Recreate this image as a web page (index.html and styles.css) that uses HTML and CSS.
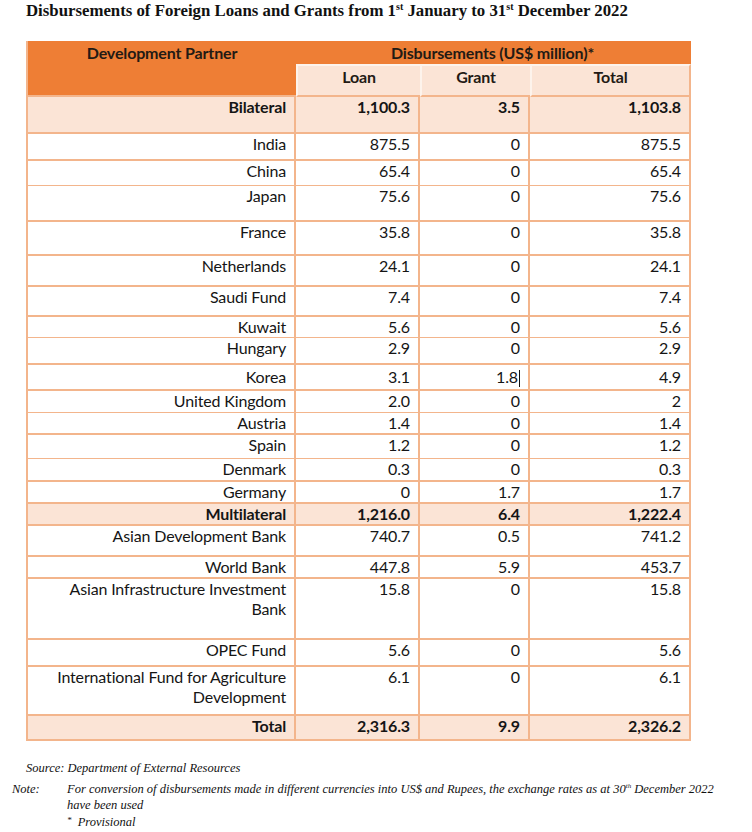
FILE: index.html
```html
<!DOCTYPE html>
<html>
<head>
<meta charset="utf-8">
<link rel="stylesheet" href="styles.css">
</head>
<body>
<div class="page">
  <h1 class="title"><span class="title-inner">Disbursements of Foreign Loans and Grants from 1<sup>st</sup> January to 31<sup>st</sup> December 2022</span></h1>

  <table class="disb">
    <colgroup>
      <col class="c1"><col class="c2"><col class="c3"><col class="c4">
    </colgroup>
    <thead>
      <tr class="hr1">
        <th rowspan="2" class="hpartner">Development Partner</th>
        <th colspan="3" class="hdisb">Disbursements (US$ million)*</th>
      </tr>
      <tr class="hr2">
        <th class="hsub">Loan</th>
        <th class="hsub">Grant</th>
        <th class="hsub">Total</th>
      </tr>
    </thead>
    <tbody>
      <tr class="sum h37"><td>Bilateral</td><td>1,100.3</td><td>3.5</td><td>1,103.8</td></tr>
      <tr class="h27"><td>India</td><td>875.5</td><td>0</td><td>875.5</td></tr>
      <tr class="h25 thin"><td>China</td><td>65.4</td><td>0</td><td>65.4</td></tr>
      <tr class="h36"><td>Japan</td><td>75.6</td><td>0</td><td>75.6</td></tr>
      <tr class="h34"><td>France</td><td>35.8</td><td>0</td><td>35.8</td></tr>
      <tr class="h31"><td>Netherlands</td><td>24.1</td><td>0</td><td>24.1</td></tr>
      <tr class="h30"><td>Saudi Fund</td><td>7.4</td><td>0</td><td>7.4</td></tr>
      <tr class="h21 thin"><td>Kuwait</td><td>5.6</td><td>0</td><td>5.6</td></tr>
      <tr class="h27"><td>Hungary</td><td>2.9</td><td>0</td><td>2.9</td></tr>
      <tr class="h26 mid"><td>Korea</td><td>3.1</td><td>1.8<span class="caret"></span></td><td>4.9</td></tr>
      <tr class="h22 thin"><td>United Kingdom</td><td>2.0</td><td>0</td><td>2</td></tr>
      <tr class="h22"><td>Austria</td><td>1.4</td><td>0</td><td>1.4</td></tr>
      <tr class="h24 thin"><td>Spain</td><td>1.2</td><td>0</td><td>1.2</td></tr>
      <tr class="h23"><td>Denmark</td><td>0.3</td><td>0</td><td>0.3</td></tr>
      <tr class="h20"><td>Germany</td><td>0</td><td>1.7</td><td>1.7</td></tr>
      <tr class="sum h22"><td>Multilateral</td><td>1,216.0</td><td>6.4</td><td>1,222.4</td></tr>
      <tr class="h31"><td>Asian Development Bank</td><td>740.7</td><td>0.5</td><td>741.2</td></tr>
      <tr class="h22"><td>World Bank</td><td>447.8</td><td>5.9</td><td>453.7</td></tr>
      <tr class="h61"><td>Asian Infrastructure Investment Bank</td><td>15.8</td><td>0</td><td>15.8</td></tr>
      <tr class="h27"><td>OPEC Fund</td><td>5.6</td><td>0</td><td>5.6</td></tr>
      <tr class="h49"><td>International Fund for Agriculture Development</td><td>6.1</td><td>0</td><td>6.1</td></tr>
      <tr class="sum h25"><td>Total</td><td>2,316.3</td><td>9.9</td><td>2,326.2</td></tr>
    </tbody>
  </table>

  <div class="notes">
    <p class="source">Source: Department of External Resources</p>
    <div class="note">
      <span class="note-label">Note:</span>
      <div class="note-body">
        <p class="note-line">For conversion of disbursements made in different currencies into US$ and Rupees, the exchange rates as at 30<sup>th</sup> December 2022</p>
        <p class="note-line">have been used</p>
        <p class="prov"><sup>*</sup> Provisional</p>
      </div>
    </div>
  </div>
</div>
</body>
</html>
```

FILE: styles.css
```css
html, body {
  margin: 0;
  padding: 0;
  background: #ffffff;
}

.page {
  width: 752px;
  height: 832px;
  overflow: hidden;
  color: #1b1b1b;
}

.title {
  margin: 0;
  padding: 0 0 0 26px;
  height: 41px;
  font-family: "Liberation Serif", "Times New Roman", serif;
  font-weight: bold;
  font-size: 16.8px;
  line-height: 21px;
  color: #111;
  white-space: nowrap;
}

.title sup {
  font-size: 10px;
  line-height: 0;
  vertical-align: 6px;
}

.disb {
  margin-left: 26px;
  width: 663px;
  table-layout: fixed;
  border-collapse: separate;
  border-spacing: 0;
  border-left: 2px solid #f3b58c;
  font-family: Lato, "Open Sans", sans-serif;
  font-size: 16px;
  letter-spacing: -0.15px;
  line-height: 20px;
  color: #151515;
}

.c1 { width: 268px; }
.c2 { width: 124px; }
.c3 { width: 110px; }
.c4 { width: 161px; }

.disb th {
  font-weight: bold;
  padding: 0;
  text-align: center;
  vertical-align: top;
  color: #231a14;
}

.hr1 { height: 23px; }
.hr2 { height: 33px; }

.hpartner {
  background: #ee7e35;
  line-height: 23px;
  border-bottom: 2px solid #f3b58c;
}

.hdisb {
  background: #ee7e35;
  line-height: 23px;
  border-right: 2px solid #ee7e35;
}

.hsub {
  background: #fbe4d6;
  border-top: 2px solid #fdf3ec;
  border-left: 2px solid #fdf3ec;
  border-bottom: 2px solid #f3b58c;
  padding-top: 1px !important;
}

.hsub:last-child {
  border-right: 2px solid #f3b58c;
}

.disb td {
  padding: 0 8px;
  text-align: right;
  vertical-align: top;
  border-right: 2px solid #f3b58c;
  border-bottom: 2px solid #f3b58c;
  white-space: normal;
}

.disb tr.thin td {
  border-bottom-width: 1px;
}

.disb tr.mid td {
  padding-top: 2px;
}

.sum td {
  background: #fbe4d6;
  font-weight: bold;
}

.caret {
  display: inline-block;
  width: 0;
  height: 17px;
  border-left: 1px solid #111;
  vertical-align: -4px;
  margin-left: 1px;
}

.h20 { height: 20px; }
.h21 { height: 21px; }
.h22 { height: 22px; }
.h23 { height: 23px; }
.h24 { height: 24px; }
.h25 { height: 25px; }
.h26 { height: 26px; }
.h27 { height: 27px; }
.h30 { height: 30px; }
.h31 { height: 31px; }
.h34 { height: 34px; }
.h36 { height: 36px; }
.h37 { height: 37px; }
.h49 { height: 49px; }
.h61 { height: 61px; }

.notes {
  margin-top: 19px;
  font-family: "Liberation Serif", "Times New Roman", serif;
  font-style: italic;
  font-size: 12.5px;
  line-height: 16.5px;
  color: #111;
}

.notes p {
  margin: 0;
}

.source {
  padding-left: 26px;
  margin-bottom: 4px !important;
}

.note {
  display: flex;
  padding-left: 12px;
}

.note-label {
  width: 55px;
  flex: none;
}

.note-body {
  width: 660px;
}

.note-line {
  white-space: nowrap;
}

.note-body sup {
  font-size: 7px;
  line-height: 0;
  vertical-align: baseline;
  position: relative;
  top: -5px;
}

.prov sup {
  font-size: 9px;
  top: -3px;
  margin-right: 3px;
}
```
